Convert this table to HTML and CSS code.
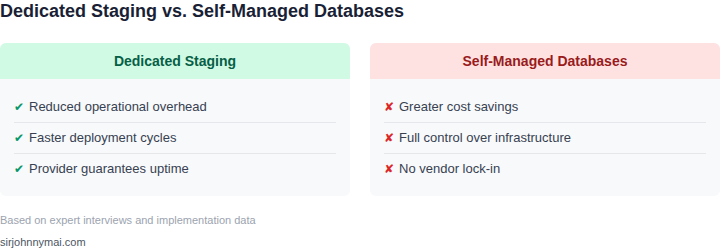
FILE: index.html
```html
<!DOCTYPE html>
<html>
<head>
<meta charset="utf-8">
<link rel="stylesheet" href="styles.css">
</head>
<body>
<div class="page">
  <h1 class="title">Dedicated Staging vs. Self-Managed Databases</h1>
  <div class="grid">
    <div class="card">
      <div class="card-head pro">Dedicated Staging</div>
      <ul class="list">
        <li class="item"><span class="mark ok">✔</span>Reduced operational overhead</li>
        <li class="item"><span class="mark ok">✔</span>Faster deployment cycles</li>
        <li class="item"><span class="mark ok">✔</span>Provider guarantees uptime</li>
      </ul>
    </div>
    <div class="card">
      <div class="card-head con">Self-Managed Databases</div>
      <ul class="list">
        <li class="item"><span class="mark no">✘</span>Greater cost savings</li>
        <li class="item"><span class="mark no">✘</span>Full control over infrastructure</li>
        <li class="item"><span class="mark no">✘</span>No vendor lock-in</li>
      </ul>
    </div>
  </div>
  <p class="note">Based on expert interviews and implementation data</p>
  <p class="site">sirjohnnymai.com</p>
</div>
</body>
</html>
```

FILE: styles.css
```css
* { box-sizing: border-box; }
html, body { margin: 0; padding: 0; background: #ffffff; }
body { font-family: "Liberation Sans", Arial, sans-serif; }
.page { width: 720px; }
.title {
  margin: 0;
  font-size: 18px;
  line-height: 22px;
  font-weight: 700;
  color: #1a1f36;
  margin-bottom: 21px;
}
.grid {
  display: grid;
  grid-template-columns: 350px 350px;
  gap: 20px;
}
.card {
  background: #f8f9fb;
  border-radius: 6px;
  overflow: hidden;
}
.card-head {
  height: 36px;
  display: flex;
  align-items: center;
  justify-content: center;
  font-size: 14px;
  font-weight: 700;
}
.card-head.pro { background: #d1fae5; color: #065f46; }
.card-head.con { background: #fee2e2; color: #991b1b; }
.list {
  list-style: none;
  margin: 0;
  padding: 13px 14px 12px;
}
.item {
  font-size: 13px;
  line-height: 16px;
  padding: 7px 0;
  color: #374151;
  border-bottom: 1px solid #e5e7eb;
  display: flex;
  align-items: center;
}
.item:last-child { border-bottom: none; }
.mark {
  width: 15px;
  font-size: 12px;
  line-height: 16px;
  font-family: "DejaVu Sans", sans-serif;
}
.mark.ok { color: #059669; }
.mark.no { color: #dc2626; }
.note {
  margin: 18px 0 0;
  font-size: 11px;
  line-height: 13px;
  color: #9ca3af;
}
.site {
  margin: 9px 0 0;
  font-size: 11px;
  line-height: 13px;
  color: #4b5563;
}
```
